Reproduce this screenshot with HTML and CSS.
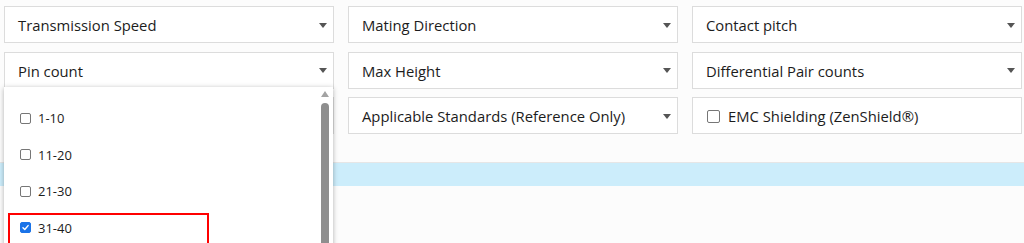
FILE: index.html
```html
<!DOCTYPE html>
<html>
<head>
<meta charset="utf-8">
<link rel="stylesheet" href="styles.css">
</head>
<body>
<div class="page">
  <div class="filters">
    <div class="field"><span class="label">Transmission Speed</span><span class="caret"></span></div>
    <div class="field"><span class="label">Mating Direction</span><span class="caret"></span></div>
    <div class="field"><span class="label">Contact pitch</span><span class="caret"></span></div>
    <div class="field"><span class="label">Pin count</span><span class="caret"></span></div>
    <div class="field"><span class="label">Max Height</span><span class="caret"></span></div>
    <div class="field"><span class="label">Differential Pair counts</span><span class="caret"></span></div>
    <div class="field"><span class="caret caret-end"></span></div>
    <div class="field"><span class="label">Applicable Standards (Reference Only)</span><span class="caret"></span></div>
    <div class="field field-check"><span class="box"></span><span class="label">EMC Shielding (ZenShield®)</span></div>
  </div>
  <div class="band"></div>

  <div class="menu">
    <ul class="options">
      <li class="opt"><span class="cb"></span><span>1-10</span></li>
      <li class="opt"><span class="cb"></span><span>11-20</span></li>
      <li class="opt"><span class="cb"></span><span>21-30</span></li>
      <li class="opt opt-hl"><span class="cb cb-on"><svg viewBox="0 0 10 10" width="10" height="10"><path d="M2.2 5.2 L4.2 7.2 L7.9 2.9" fill="none" stroke="#fff" stroke-width="1.6" stroke-linecap="round" stroke-linejoin="round"/></svg></span><span>31-40</span></li>
    </ul>
    <div class="scroll">
      <span class="up"></span>
      <span class="thumb"></span>
    </div>
  </div>
</div>
</body>
</html>
```

FILE: styles.css
```css
html, body {
  margin: 0;
  padding: 0;
  background: #fcfcfc;
  font-family: "Open Sans", "Noto Sans", sans-serif;
  color: #1c1c1c;
}
.page {
  position: relative;
  width: 1024px;
  height: 243px;
  overflow: hidden;
}
.filters {
  display: grid;
  grid-template-columns: 330px 330px 330px;
  column-gap: 14px;
  row-gap: 8.5px;
  padding: 6px 0 0 4px;
}
.field {
  height: 37px;
  box-sizing: border-box;
  border: 1px solid #dcdcdc;
  background: #fff;
  display: flex;
  align-items: center;
  justify-content: space-between;
  padding: 1px 6px 0 13px;
  font-size: 14.8px;
}
.caret-end {
  margin-left: auto;
}
.field-check {
  justify-content: flex-start;
  padding-left: 14px;
}
.caret {
  width: 0;
  height: 0;
  border-left: 4px solid transparent;
  border-right: 4px solid transparent;
  border-top: 5px solid #555;
  margin-top: 0;
}
.box {
  width: 11px;
  height: 11px;
  border: 1px solid #767676;
  border-radius: 2px;
  background: #fff;
  margin-right: 8px;
}
.band {
  margin-top: 28px;
  height: 24px;
  background: #ccedfb;
  border-top: 1px solid #e6e6e6;
  box-sizing: border-box;
}
.menu {
  position: absolute;
  left: 4px;
  top: 87px;
  width: 329px;
  height: 170px;
  background: #fff;
  box-shadow: 0 1px 5px rgba(0, 0, 0, 0.3);
  display: flex;
}
.options {
  flex: 1;
  list-style: none;
  margin: 0;
  padding: 13px 0 0 0;
  font-size: 13px;
}
.opt {
  height: 36.5px;
  display: flex;
  align-items: center;
  padding-left: 16px;
  box-sizing: border-box;
}
.opt-hl {
  margin: 3.5px 0 0 4px;
  width: 201px;
  height: 32px;
  border: 2px solid #f00;
  padding-left: 10px;
  padding-bottom: 3px;
}
.cb {
  width: 9px;
  height: 9px;
  border: 1px solid #767676;
  border-radius: 2px;
  background: #fff;
  margin-right: 7px;
  display: flex;
  align-items: center;
  justify-content: center;
}
.cb svg {
  width: 9px;
  height: 9px;
}
.cb-on {
  background: #1a73e8;
  border-color: #1a73e8;
}
.scroll {
  width: 16px;
  display: flex;
  flex-direction: column;
  align-items: center;
  padding-top: 4px;
}
.up {
  width: 0;
  height: 0;
  border-left: 4.5px solid transparent;
  border-right: 4.5px solid transparent;
  border-bottom: 6px solid #a3a3a3;
}
.thumb {
  margin-top: 6px;
  width: 8px;
  height: 160px;
  border-radius: 4px;
  background: #8e8e8e;
}
```
